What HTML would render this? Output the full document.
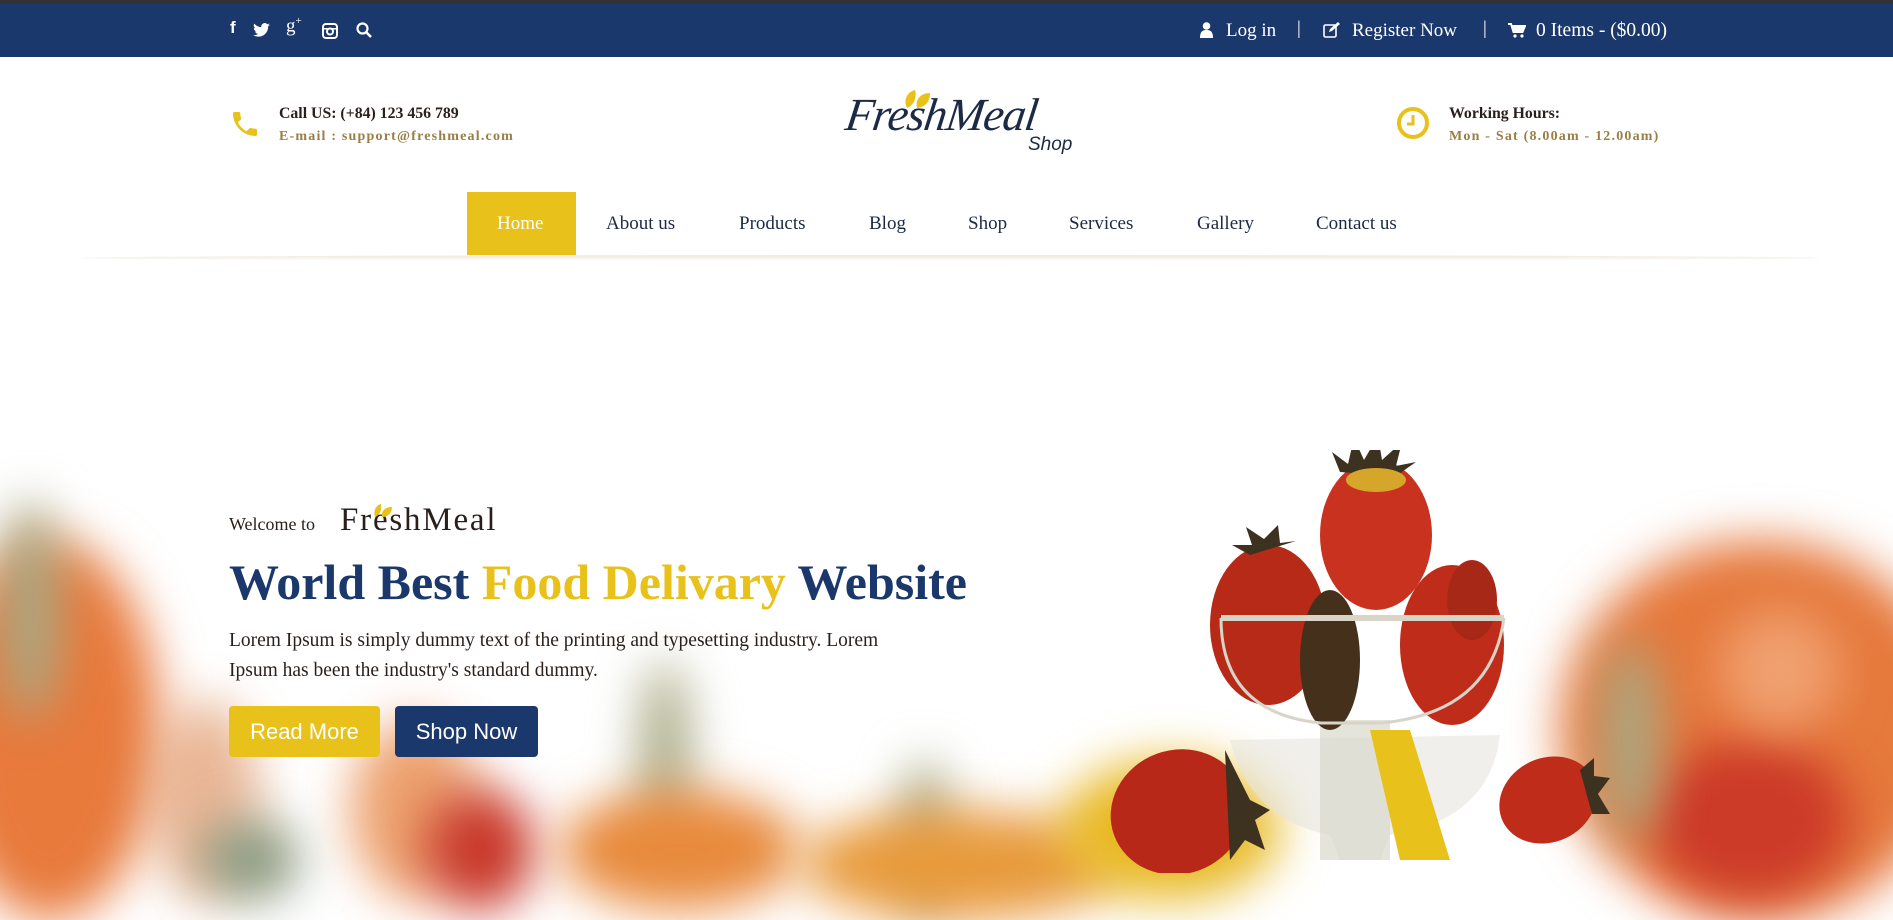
<!DOCTYPE html>
<html><head><meta charset="utf-8"><style>
*{margin:0;padding:0;box-sizing:border-box}
body{width:1893px;height:873px;overflow:hidden;background:#fff;font-family:"Liberation Serif",serif;position:relative}
.top{position:absolute;left:0;top:0;width:1893px;height:57px;background:#1a386b;border-top:4px solid #333}
.top .ic{position:absolute;top:14px;color:#fff;font-size:17px;font-family:"Liberation Sans",sans-serif;font-weight:bold}
.top .r{position:absolute;top:16px;color:#fff;font-size:19px}
.abs{position:absolute}
.nav{position:absolute;top:192px;height:63px;font-size:19px;color:#1d2a44;line-height:63px}
.blob{position:absolute;border-radius:50%;filter:blur(24px)}
</style></head><body>
<div class="top">
  <span class="ic" style="left:230px">f</span>
  <svg class="abs" style="left:253px;top:19px" width="17" height="14" viewBox="0 0 24 20"><path fill="#fff" d="M24 2.4a10 10 0 0 1-2.8.8A5 5 0 0 0 23.3.5a10 10 0 0 1-3.1 1.2A4.9 4.9 0 0 0 11.8 6 14 14 0 0 1 1.7.9a4.9 4.9 0 0 0 1.5 6.6A4.9 4.9 0 0 1 1 6.9a4.9 4.9 0 0 0 3.9 4.9 5 5 0 0 1-2.2.1 4.9 4.9 0 0 0 4.6 3.4A9.9 9.9 0 0 1 0 17.3 14 14 0 0 0 7.5 19.5c9 0 14-7.5 14-14v-.6A10 10 0 0 0 24 2.4z"/></svg>
  <span class="ic" style="left:286px;font-family:'Liberation Serif';font-weight:normal;font-size:19px;top:11px">g<sup style="font-size:11px">+</sup></span>
  <svg class="abs" style="left:322px;top:19px" width="16" height="16" viewBox="0 0 16 16"><rect x="1" y="1" width="14" height="14" rx="3" fill="none" stroke="#fff" stroke-width="2"/><circle cx="8" cy="8.5" r="3" fill="none" stroke="#fff" stroke-width="2"/><rect x="1" y="5" width="14" height="1.5" fill="#fff"/></svg>
  <svg class="abs" style="left:356px;top:18px" width="16" height="17" viewBox="0 0 16 17"><circle cx="6.5" cy="6.5" r="5" fill="none" stroke="#fff" stroke-width="2.2"/><path d="M10 10l5 5" stroke="#fff" stroke-width="2.6"/></svg>
  <svg class="abs" style="left:1200px;top:18px" width="13" height="16" viewBox="0 0 13 16"><circle cx="6.5" cy="4" r="3.8" fill="#fff"/><path d="M0 16c0-6 2-8 6.5-8S13 10 13 16z" fill="#fff"/></svg>
  <span class="r" style="left:1226px">Log in</span>
  <span class="r" style="left:1297px;top:14px">|</span>
  <svg class="abs" style="left:1323px;top:18px" width="17" height="16" viewBox="0 0 17 16"><rect x="1" y="3" width="12" height="12" rx="1.5" fill="none" stroke="#fff" stroke-width="1.6"/><path d="M6 10l1-3 8-7 2 2-8 7z" fill="#fff"/></svg>
  <span class="r" style="left:1352px">Register Now</span>
  <span class="r" style="left:1483px;top:14px">|</span>
  <svg class="abs" style="left:1508px;top:19px" width="18" height="15" viewBox="0 0 18 15"><path d="M0 1h3l2.5 8h9L17 3H4.5" fill="none" stroke="#fff" stroke-width="2"/><path d="M5 3h12l-2.5 6h-9z" fill="#fff"/><circle cx="7" cy="13" r="1.6" fill="#fff"/><circle cx="14" cy="13" r="1.6" fill="#fff"/></svg>
  <span class="r" style="left:1536px;font-size:19.5px">0 Items - ($0.00)</span>
</div>

<svg class="abs" style="left:229px;top:108px" width="32" height="32" viewBox="0 0 24 24"><path fill="#e8c21a" d="M6.6 10.8a15.1 15.1 0 0 0 6.6 6.6l2.2-2.2c.3-.3.7-.4 1-.2 1.1.4 2.3.6 3.6.6.6 0 1 .4 1 1V20c0 .6-.4 1-1 1A17 17 0 0 1 3 4c0-.6.4-1 1-1h3.5c.6 0 1 .4 1 1 0 1.3.2 2.5.6 3.6.1.3 0 .7-.2 1z"/></svg>
<div class="abs" style="left:279px;top:105px;font-size:15.8px;font-weight:bold;color:#2a1f1a">Call US: (+84) 123 456 789</div>
<div class="abs" style="left:279px;top:129px;font-size:14px;font-weight:bold;color:#9a7f45;letter-spacing:1.2px">E-mail : support@freshmeal.com</div>

<svg class="abs" style="left:903px;top:86px" width="34" height="24" viewBox="0 0 34 24"><path d="M4 22C0 14 4 6 12 4c2 8-1 15-8 18z" fill="#e8c21a"/><path d="M14 22c-2-9 4-15 13-15 0 9-5 14-13 15z" fill="#e8c21a"/></svg>
<div class="abs" style="left:846px;top:88px;font-size:46px;font-style:italic;font-family:'Liberation Serif',serif;color:#1c2a46;letter-spacing:-1px;transform:skewX(-8deg)">FreshMeal</div>
<div class="abs" style="left:1028px;top:134px;font-size:19px;font-family:'Liberation Sans',sans-serif;font-style:italic;color:#1c2a46">Shop</div>

<svg class="abs" style="left:1396px;top:106px" width="34" height="34" viewBox="0 0 34 34"><circle cx="17" cy="17" r="14" fill="none" stroke="#e8c21a" stroke-width="4"/><path d="M17 9v9h-6" fill="none" stroke="#e8c21a" stroke-width="3"/></svg>
<div class="abs" style="left:1449px;top:105px;font-size:15.8px;font-weight:bold;color:#2a1f1a">Working Hours:</div>
<div class="abs" style="left:1449px;top:129px;font-size:14px;font-weight:bold;color:#9a7f45;letter-spacing:1.2px">Mon - Sat (8.00am - 12.00am)</div>

<div class="abs" style="left:467px;top:192px;width:109px;height:63px;background:#e8c21a"></div>
<div class="nav" style="left:497px;color:#fff">Home</div>
<div class="nav" style="left:606px">About us</div>
<div class="nav" style="left:739px">Products</div>
<div class="nav" style="left:869px">Blog</div>
<div class="nav" style="left:968px">Shop</div>
<div class="nav" style="left:1069px">Services</div>
<div class="nav" style="left:1197px">Gallery</div>
<div class="nav" style="left:1316px">Contact us</div>
<div class="abs" style="left:80px;top:255px;width:1740px;height:6px;background:linear-gradient(#efe8da,rgba(255,255,255,0));border-radius:50%"></div>

<div class="blob" style="left:-60px;top:540px;width:220px;height:380px;background:#e87a3c"></div>
<div class="blob" style="left:0px;top:500px;width:60px;height:220px;background:#a9a883"></div>
<div class="blob" style="left:150px;top:700px;width:110px;height:200px;background:#e0986a;opacity:.7"></div>
<div class="blob" style="left:200px;top:820px;width:100px;height:80px;background:#8b9a80"></div>
<div class="blob" style="left:350px;top:720px;width:130px;height:180px;background:#e88a4a;opacity:.8"></div>
<div class="blob" style="left:425px;top:790px;width:110px;height:120px;background:#c8382a"></div>
<div class="blob" style="left:640px;top:660px;width:50px;height:200px;background:#a9a883"></div>
<div class="blob" style="left:560px;top:790px;width:240px;height:120px;background:#e88a3c"></div>
<div class="blob" style="left:900px;top:760px;width:50px;height:160px;background:#a9a883"></div>
<div class="blob" style="left:800px;top:810px;width:320px;height:110px;background:#e89a3c"></div>
<div class="blob" style="left:1060px;top:760px;width:220px;height:140px;background:#e8b820"></div>
<div class="blob" style="left:1560px;top:540px;width:400px;height:380px;background:#e6793c"></div>
<div class="blob" style="left:1650px;top:740px;width:200px;height:160px;background:#cc3a28"></div>
<div class="blob" style="left:1600px;top:640px;width:60px;height:200px;background:#a9a883"></div>
<div class="blob" style="left:1720px;top:610px;width:120px;height:120px;background:#f0a070"></div>

<svg class="abs" style="left:1100px;top:450px" width="520" height="423" viewBox="1100 450 520 423">
  <path d="M1230 740q20 80 100 95l10 25h40l10-25q100-15 110-100z" fill="#e6e4de" opacity=".6"/>
  <rect x="1320" y="720" width="70" height="140" fill="#d8d8cc" opacity=".7"/>
  <path d="M1370 730l40 0 40 130h-50z" fill="#e8c21a"/>
  <ellipse cx="1376" cy="535" rx="56" ry="75" fill="#c8321f"/>
  <path d="M1340 472l-8-20 16 12 6-26 10 22 14-24 4 24 20-18-6 24 20-4-20 14z" fill="#3d3120"/>
  <ellipse cx="1376" cy="480" rx="30" ry="12" fill="#d6a62a"/>
  <ellipse cx="1268" cy="625" rx="58" ry="80" fill="#b82a18"/>
  <path d="M1250 555l-18-10 20 0-6-18 18 12 14-14 2 18 16-2z" fill="#3d3120"/>
  <ellipse cx="1452" cy="645" rx="52" ry="80" fill="#c02c1a"/>
  <ellipse cx="1330" cy="660" rx="30" ry="70" fill="#45301c"/>
  <ellipse cx="1472" cy="600" rx="25" ry="40" fill="#a82818"/>
  <path d="M1221 618h283" stroke="#d8d4c8" stroke-width="6"/>
  <path d="M1221 618q0 95 100 105h60q110-10 123-105" fill="none" stroke="#d8d4c8" stroke-width="3"/>
  <ellipse cx="1178" cy="812" rx="68" ry="62" fill="#b82818" transform="rotate(-20 1178 812)"/>
  <path d="M1225 750l15 30 10 20 20 10-15 10 10 30-20-10-15 20z" fill="#3d3120"/>
  <ellipse cx="1548" cy="800" rx="50" ry="42" fill="#c02c1a" transform="rotate(-25 1548 800)"/>
  <path d="M1580 770l14-12 0 18 16 2-12 16 12 20-18 0z" fill="#3d3120"/>
</svg>

<div class="abs" style="left:229px;top:514px;font-size:18px;color:#2a1f1a">Welcome to</div>
<div class="abs" style="left:340px;top:502px;font-size:33px;color:#2a1f1a;letter-spacing:1.8px">FreshMeal</div>
<svg class="abs" style="left:373px;top:501px" width="22" height="18" viewBox="0 0 22 18"><path d="M2 16C0 10 3 4 8 3c1 6-1 11-6 13z" fill="#e8c21a"/><path d="M9 16c-1-6 3-10 10-10 0 6-4 10-10 10z" fill="#e8c21a"/></svg>
<div class="abs" style="left:229px;top:553px;font-size:50px;font-weight:bold;color:#1a386b;white-space:nowrap">World Best <span style="color:#e8c21a">Food Delivary</span> Website</div>
<div class="abs" style="left:229px;top:626px;width:690px;font-size:19.5px;line-height:30px;color:#2a1f1a">Lorem Ipsum is simply dummy text of the printing and typesetting industry. Lorem Ipsum has been the industry's standard dummy.</div>
<div class="abs" style="left:229px;top:706px;width:151px;height:51px;background:#e8c21a;border-radius:4px;color:#fff;font-family:'Liberation Sans',sans-serif;font-size:22px;line-height:51px;text-align:center">Read More</div>
<div class="abs" style="left:395px;top:706px;width:143px;height:51px;background:#1a386b;border-radius:4px;color:#fff;font-family:'Liberation Sans',sans-serif;font-size:22px;line-height:51px;text-align:center">Shop Now</div>
</body></html>
